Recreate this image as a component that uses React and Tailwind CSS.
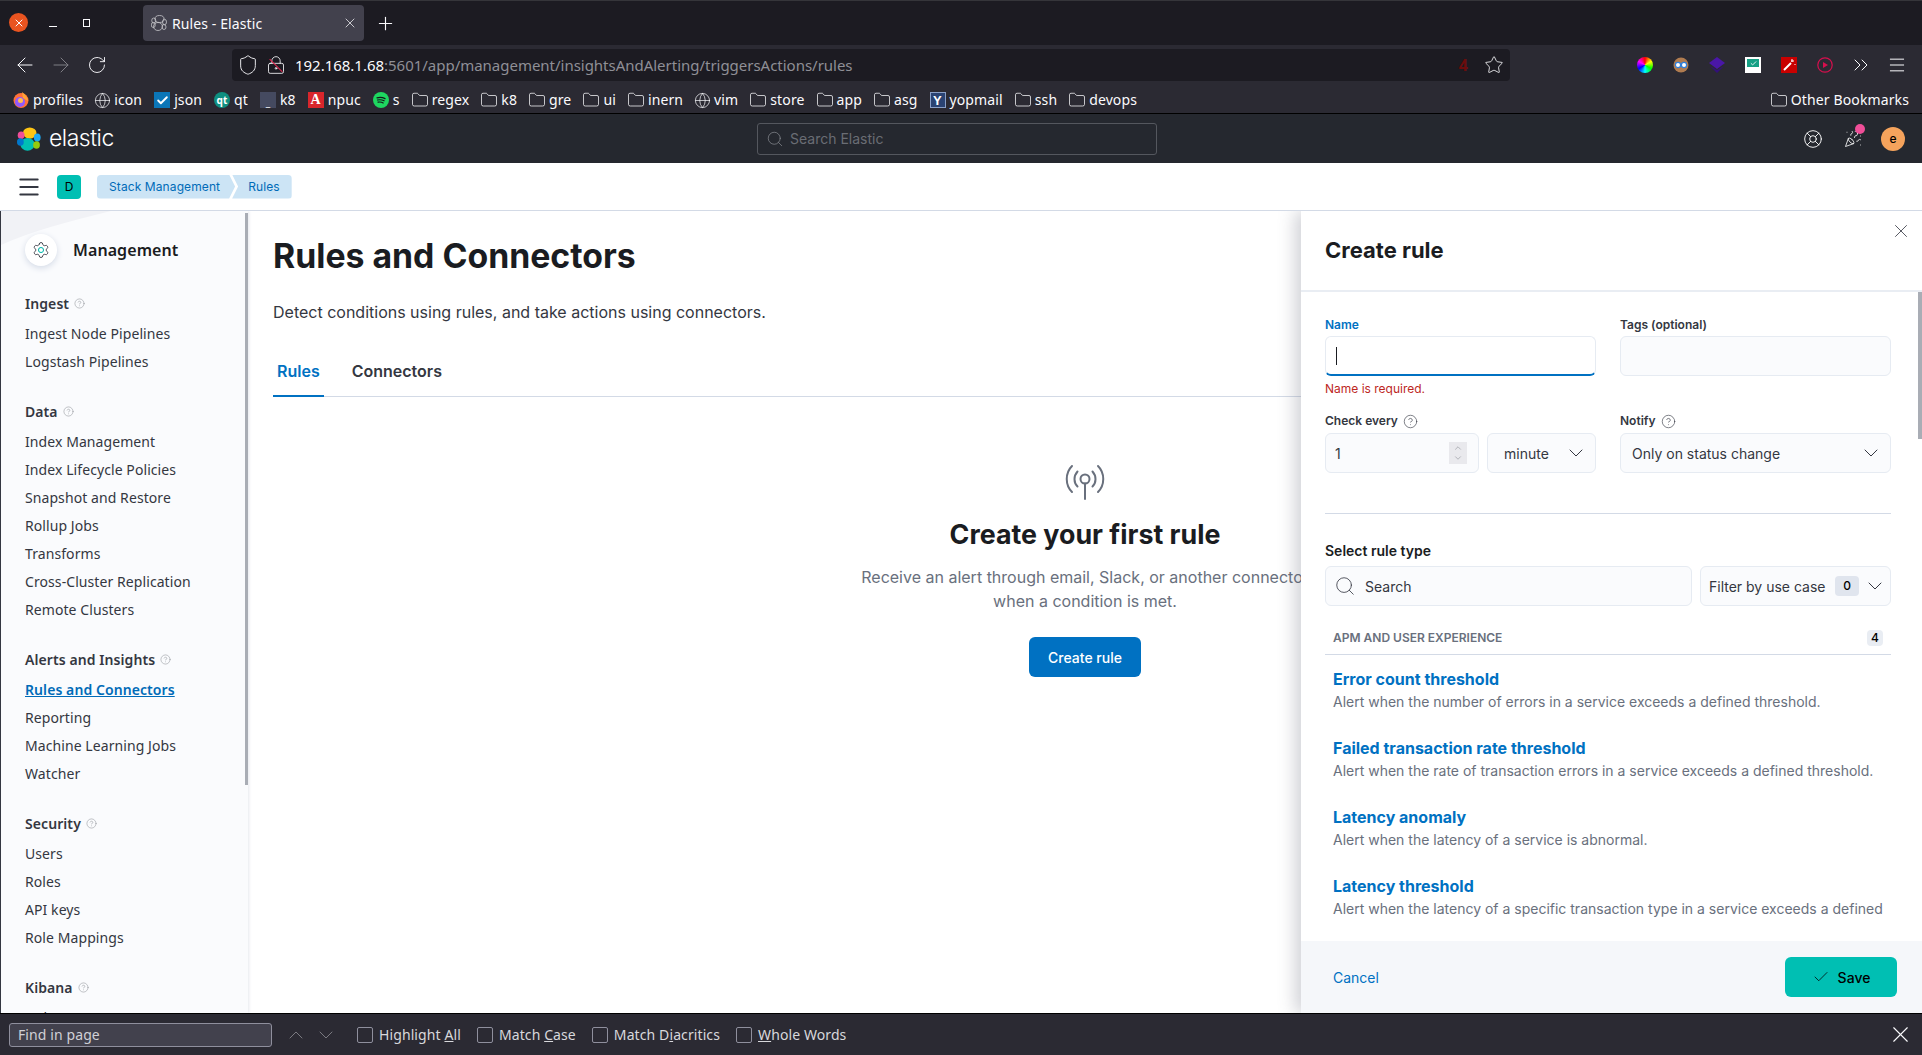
import React from "react";
import {
  ArrowLeft,
  ArrowRight,
  Check,
  ChevronDown,
  ChevronUp,
  ChevronsRight,
  CircleHelp,
  Folder,
  Globe,
  LifeBuoy,
  LockKeyhole,
  Menu,
  PartyPopper,
  Plus,
  RotateCw,
  Search,
  Settings,
  Shield,
  Star,
  X,
} from "lucide-react";

const ElasticLogo = ({ size = 24 }) => (
  <svg width={size} height={size} viewBox="0 0 32 32">
    <ellipse cx="17" cy="8" rx="9" ry="7.5" fill="#fec514" />
    <ellipse cx="5.5" cy="11" rx="4.5" ry="5" fill="#f04e98" />
    <ellipse cx="27" cy="14" rx="4.5" ry="5.5" fill="#1ba9f5" />
    <ellipse cx="14" cy="23" rx="9.5" ry="8.5" fill="#00bfb3" />
    <ellipse cx="4.5" cy="20" rx="4.5" ry="5" fill="#0077cc" />
    <ellipse cx="26" cy="24" rx="4.5" ry="5" fill="#93c90e" />
  </svg>
);

const TabFavicon = () => (
  <svg width="16" height="16" viewBox="0 0 32 32" fill="none" stroke="#c8c8cc" strokeWidth="1.6">
    <ellipse cx="17" cy="8" rx="9" ry="7" />
    <ellipse cx="5.5" cy="11" rx="4" ry="5" />
    <ellipse cx="27" cy="14" rx="4" ry="5.5" />
    <ellipse cx="14" cy="23" rx="9" ry="8" />
    <ellipse cx="4.5" cy="20" rx="4" ry="5" />
    <ellipse cx="26" cy="24" rx="4" ry="5" />
  </svg>
);

const Firefox = () => (
  <svg width="16" height="16" viewBox="0 0 16 16">
    <circle cx="8" cy="8.5" r="7.5" fill="#ff7139" />
    <circle cx="7" cy="10" r="5" fill="#9059ff" />
    <circle cx="7.5" cy="8.5" r="2.5" fill="#ffbd4f" />
    <path d="M9 0 C13 3 15 6 15 9 L10 6Z" fill="#ffa436" />
  </svg>
);

const JsonIcon = () => (
  <span className="flex h-4 w-4 items-center justify-center bg-[#0b76b8]">
    <Check size={13} strokeWidth={3.5} className="text-white" />
  </span>
);
const QtIcon = () => (
  <span className="flex h-4 w-4 items-center justify-center rounded-full bg-[#0f8f80] text-[10px] font-bold leading-none text-white">
    qt
  </span>
);
const TermIcon = () => (
  <span className="flex h-4 w-4 items-end justify-center bg-[#454a60] pb-0.5 text-[10px] leading-[8px] text-white">
    _
  </span>
);
const NpucIcon = () => (
  <span className="flex h-4 w-4 items-center justify-center bg-[#d8262c] font-['Liberation_Serif',serif] text-[14px] font-bold leading-none text-white">
    A
  </span>
);
const SpotifyIcon = () => (
  <svg width="16" height="16" viewBox="0 0 16 16" fill="none" stroke="#14171a" strokeWidth="1.2" strokeLinecap="round">
    <circle cx="8" cy="8" r="8" fill="#1ed760" stroke="none" />
    <path d="M4 5.8c2.8-.7 5.6-.5 8 .8M4.5 8c2.3-.5 4.6-.3 6.6.8M5 10.2c1.8-.4 3.6-.2 5.2.7" />
  </svg>
);
const YopIcon = () => (
  <span className="flex h-4 w-4 items-center justify-center border border-[#8aa0c8] bg-[#2a4373] font-['Liberation_Sans',sans-serif] text-[13px] font-bold leading-none text-white">
    Y
  </span>
);
const GlobeIcon = () => <Globe size={17} strokeWidth={1} className="-mx-px text-[#fbfbfe]" />;
const FolderIcon = () => <Folder size={18} strokeWidth={1} className="-mx-px text-[#fbfbfe]" />;

const BOOKMARKS = [
  { label: "profiles", icon: <Firefox /> },
  { label: "icon", icon: <GlobeIcon /> },
  { label: "json", icon: <JsonIcon /> },
  { label: "qt", icon: <QtIcon /> },
  { label: "k8", icon: <TermIcon /> },
  { label: "npuc", icon: <NpucIcon /> },
  { label: "s", icon: <SpotifyIcon /> },
  { label: "regex", icon: <FolderIcon /> },
  { label: "k8", icon: <FolderIcon /> },
  { label: "gre", icon: <FolderIcon /> },
  { label: "ui", icon: <FolderIcon /> },
  { label: "inern", icon: <FolderIcon /> },
  { label: "vim", icon: <GlobeIcon /> },
  { label: "store", icon: <FolderIcon /> },
  { label: "app", icon: <FolderIcon /> },
  { label: "asg", icon: <FolderIcon /> },
  { label: "yopmail", icon: <YopIcon /> },
  { label: "ssh", icon: <FolderIcon /> },
  { label: "devops", icon: <FolderIcon /> },
];

const NAV = [
  { title: "Ingest", items: ["Ingest Node Pipelines", "Logstash Pipelines"] },
  {
    title: "Data",
    items: [
      "Index Management",
      "Index Lifecycle Policies",
      "Snapshot and Restore",
      "Rollup Jobs",
      "Transforms",
      "Cross-Cluster Replication",
      "Remote Clusters",
    ],
  },
  {
    title: "Alerts and Insights",
    items: ["Rules and Connectors", "Reporting", "Machine Learning Jobs", "Watcher"],
  },
  { title: "Security", items: ["Users", "Roles", "API keys", "Role Mappings"] },
  { title: "Kibana", items: ["Index Patterns"] },
];

const RULE_TYPES = [
  {
    title: "Error count threshold",
    text: "Alert when the number of errors in a service exceeds a defined threshold.",
  },
  {
    title: "Failed transaction rate threshold",
    text: "Alert when the rate of transaction errors in a service exceeds a defined threshold.",
  },
  { title: "Latency anomaly", text: "Alert when the latency of a service is abnormal." },
  {
    title: "Latency threshold",
    text: "Alert when the latency of a specific transaction type in a service exceeds a defined",
  },
];

const FIND_OPTIONS = [
  { before: "Highlight ", key: "A", after: "ll" },
  { before: "Match ", key: "C", after: "ase" },
  { before: "Match D", key: "i", after: "acritics" },
  { before: "", key: "W", after: "hole Words" },
];

const BrowserChrome = () => (
  <div className="shrink-0 font-['Noto_Sans',sans-serif] text-[#fbfbfe]">
    {/* tabs */}
    <div className="flex h-[45px] items-start border-t border-t-[#35353a] bg-[#1c1b22] pt-1">
      <span className="ml-[9px] mt-[8px] flex h-[19px] w-[19px] items-center justify-center rounded-full bg-[#e95420]">
        <X size={12} strokeWidth={2} />
      </span>
      <span className="ml-[21px] mt-[21px] h-px w-2 bg-[#fbfbfe]" />
      <span className="ml-[26px] mt-[14px] h-[8px] w-[7px] border border-[#fbfbfe]" />
      <div className="ml-[53px] flex h-9 w-[221px] items-center rounded bg-[#42414d] pl-2 pr-[6px]">
        <TabFavicon />
        <span className="ml-[5px] flex-1 text-[14px] tracking-[0.1px]">Rules - Elastic</span>
        <X size={16} strokeWidth={1.1} />
      </div>
      <Plus size={21} strokeWidth={1.3} className="ml-[11px] mt-[8px]" />
    </div>
    {/* nav bar */}
    <div className="flex h-10 items-center bg-[#2b2a33]">
      <ArrowLeft size={24} strokeWidth={1} className="ml-[13px]" />
      <ArrowRight size={24} strokeWidth={1} className="ml-[12px] text-[#7f7e85]" />
      <RotateCw size={20} strokeWidth={1.1} className="ml-[14px]" />
      <div className="ml-[125px] flex h-8 w-[1278px] items-center rounded bg-[#1c1b22] pl-[5px] pr-[6px]">
        <Shield size={22} strokeWidth={1} />
        <span className="relative ml-[7px] flex">
          <LockKeyhole size={20} strokeWidth={1} />
          <span className="absolute left-[1px] top-[10px] h-px w-[18px] rotate-45 bg-[#e22850]" />
        </span>
        <span className="ml-[9px] flex-1 whitespace-nowrap text-[15px] tracking-[-0.02px]">
          192.168.1.68<span className="text-[#8f8f96]">:5601/app/management/insightsAndAlerting/triggersActions/rules</span>
        </span>
        <span className="mr-[16px] text-[16px] font-bold text-[#6b0d0d]">4</span>
        <Star size={20} strokeWidth={1} />
      </div>
      <div className="ml-[127px] flex items-center">
        <span className="h-4 w-4 rounded-full bg-[conic-gradient(#ff0000,#ffff00,#00ff00,#00ffff,#0000ff,#ff00ff,#ff0000)]" />
        <svg width="16" height="16" viewBox="0 0 16 16" fill="none" className="ml-[20px]">
          <circle cx="8" cy="8" r="7.5" fill="#b07c50" />
          <circle cx="5" cy="8" r="2.6" fill="#ffffff" stroke="#2f7fdc" strokeWidth="1.2" />
          <circle cx="11" cy="8" r="2.6" fill="#ffffff" stroke="#2f7fdc" strokeWidth="1.2" />
        </svg>
        <svg width="16" height="16" viewBox="0 0 16 16" className="ml-[20px]">
          <path d="M8 0l8 6-8 6-8-6z" fill="#4a17a8" />
          <path d="M1 9l7 7 7-7-7 4z" fill="#33107a" />
        </svg>
        <span className="ml-[20px] flex h-4 w-4 items-start justify-center bg-white pt-[2px]">
          <span className="flex h-[8px] w-[12px] items-center justify-center bg-[#17a085]">
            <Check size={7} strokeWidth={3} />
          </span>
        </span>
        <svg width="16" height="16" viewBox="0 0 16 16" fill="none" className="ml-[20px]">
          <rect width="16" height="16" fill="#c90000" />
          <path d="M3 13l7-7" stroke="#ffffff" strokeWidth="2" />
          <path d="M11 2v3M13 4h-3M14 7v1" stroke="#ffffff" strokeWidth="1" />
        </svg>
        <svg width="16" height="16" viewBox="0 0 16 16" className="ml-[20px]" fill="none">
          <circle cx="8" cy="8" r="7.2" stroke="#d70f4e" strokeWidth="1.2" />
          <path d="M6 5l5 3-5 3z" fill="#d70f4e" />
        </svg>
        <ChevronsRight size={24} strokeWidth={1} className="ml-[16px]" />
        <Menu size={20} strokeWidth={1.2} className="ml-[14px]" />
      </div>
    </div>
    {/* bookmarks */}
    <div className="flex h-[29px] items-center justify-between border-b border-b-black bg-[#2b2a33] pl-[13px] pr-[13px] pt-[2px] text-[14px] leading-none tracking-[0.12px]">
      <div className="flex items-center gap-[12px]">
        {BOOKMARKS.map((b, i) => (
          <span key={i} className="flex items-center gap-[4px]">
            {b.icon}
            {b.label}
          </span>
        ))}
      </div>
      <span className="flex items-center gap-[4px]">
        <FolderIcon />
        Other Bookmarks
      </span>
    </div>
  </div>
);

const KibanaHeader = () => (
  <header className="relative flex h-[49px] shrink-0 items-center justify-between bg-[#25282f] pl-[17px] pr-[17px] font-['Inter',sans-serif]">
    <div className="flex items-center gap-2">
      <ElasticLogo />
      <span className="text-[23px] font-light leading-none tracking-[-0.5px] text-white">elastic</span>
    </div>
    <div className="absolute left-[757px] flex h-8 w-[400px] items-center rounded-[3px] border border-[#54575e] pl-2 text-[14px] text-[#6a6d74]">
      <Search size={18} strokeWidth={0.9} className="text-[#8e9097]" />
      <span className="ml-[6px]">Search Elastic</span>
    </div>
    <div className="flex items-center text-white">
      <LifeBuoy size={20} strokeWidth={1.1} />
      <span className="relative ml-[21px] flex">
        <PartyPopper size={18} strokeWidth={1.1} />
        <span className="absolute -top-[6px] left-[11px] h-[10px] w-[10px] rounded-full bg-[#f04e98]" />
      </span>
      <span className="ml-[19px] flex h-6 w-6 items-center justify-center rounded-full bg-[#f5a35c] text-[12px] font-medium text-black">e</span>
    </div>
  </header>
);

const Breadcrumbs = () => (
  <div className="flex h-[48px] shrink-0 items-center border-b border-b-[#d3dae6] bg-white font-['Inter',sans-serif]">
    <Menu size={26} strokeWidth={1.9} className="ml-[16px] text-[#343741]" />
    <span className="ml-[15px] flex h-6 w-6 items-center justify-center rounded bg-[#00bfb3] text-[12px] text-black">D</span>
    <div className="ml-4 flex h-6 text-[12px] tracking-[0.1px] text-[#006bb8]">
      <span className="flex items-center rounded-l bg-[#cce4f5] pl-3 pr-[15px] [clip-path:polygon(0_0,calc(100%-6px)_0,100%_50%,calc(100%-6px)_100%,0_100%)]">
        Stack Management
      </span>
      <span className="-ml-[3px] flex items-center rounded-r bg-[#cce4f5] pl-4 pr-3 [clip-path:polygon(0_0,100%_0,100%_100%,0_100%,6px_50%)]">Rules</span>
    </div>
  </div>
);

const Sidebar = () => (
  <aside className="relative flex h-full w-[248px] shrink-0 flex-col overflow-hidden border-l border-l-[#343741] bg-[#fafbfd] pl-[24px] text-[14px] tracking-[0.08px] shadow-[1px_0_3px_#e6e8ee]">
    <svg className="absolute left-0 top-0" width="110" height="36" viewBox="0 0 110 36">
      <path d="M0 0H110C70 10 30 20 0 34Z" fill="#f1f2f6" />
    </svg>
    <div className="relative mb-[27px] mt-[23px] flex h-8 items-center gap-[16px]">
      <span className="relative flex h-8 w-8 items-center justify-center rounded-full bg-white shadow-[0_2px_6px_#d3dae6]">
        <Settings size={18} strokeWidth={1.2} className="text-[#343741]" />
        <span className="absolute left-[13px] top-[13px] h-[6px] w-[6px] rounded-full border border-[#00bfb3] bg-white" />
      </span>
      <span className="text-[16px] font-semibold text-[#1a1c21]">Management</span>
    </div>
    {NAV.map((section) => (
      <div key={section.title} className="relative mb-[26px]">
        <div className="mb-[6px] flex h-5 items-center gap-[5px] font-semibold text-[#343741]">
          {section.title}
          <CircleHelp size={11} strokeWidth={1.1} className="text-[#8a8d94]" />
        </div>
        {section.items.map((item) => (
          <div
            key={item}
            className={
              item === "Rules and Connectors"
                ? "flex h-7 items-center font-semibold text-[#006bb8] underline"
                : "flex h-7 items-center text-[#343741]"
            }
          >
            {item}
          </div>
        ))}
      </div>
    ))}
    <div className="absolute left-[244px] top-[2px] h-[572px] w-[3px] bg-[#a9adb5]" />
  </aside>
);

const RuleIcon = () => (
  <svg width="42" height="38" viewBox="0 0 42 38" fill="none" stroke="#69707d" strokeWidth="2" strokeLinecap="round">
    <circle cx="21" cy="16" r="4.500" />
    <path d="M21 20.500V36" />
    <path d="M13.500 8.500c-4 4.500-4 11 0 15M28.500 8.500c4 4.500 4 11 0 15" />
    <path d="M8 3c-7 7-7 19 0 26M34 3c7 7 7 19 0 26" />
  </svg>
);

const MainContent = () => (
  <main className="flex min-w-0 flex-1 flex-col bg-white pl-[25px] pr-0 pt-[24px] font-['Inter',sans-serif]">
    <h1 className="text-[33.8px] font-bold leading-[42px] text-[#1a1c21]">Rules and Connectors</h1>
    <p className="mt-[23px] text-[16px] leading-6 text-[#343741]">
      Detect conditions using rules, and take actions using connectors.
    </p>
    <div className="mt-[24px] flex h-[49px] gap-[24px] border-b border-b-[#d3dae6] text-[16px] font-semibold">
      <span className="flex h-[49px] items-center border-b-2 border-b-[#0071c2] px-1 pb-[2px] text-[#0071c2]">Rules</span>
      <span className="flex h-[49px] items-center px-1 pb-[4px] text-[#343741]">Connectors</span>
    </div>
    <div className="-ml-[25px] flex flex-col items-center pt-[66px]">
      <RuleIcon />
      <h2 className="mt-[15px] text-[26.8px] font-bold leading-9 text-[#1a1c21]">Create your first rule</h2>
      <p className="mt-[13px] text-center text-[16px] leading-6 text-[#69707d]">
        Receive an alert through email, Slack, or another connector
        <br />
        when a condition is met.
      </p>
      <button className="mt-[24px] h-10 w-[112px] rounded-md bg-[#0071c2] text-[14px] font-medium text-white">Create rule</button>
    </div>
  </main>
);

const FieldLabel = ({ children, className = "text-[#343741]" }) => (
  <div className={`flex h-[14px] items-center gap-[5px] text-[12px] font-semibold ${className}`}>{children}</div>
);

const Help = () => <CircleHelp size={15} strokeWidth={1} className="text-[#343741]" />;

const inputBox = "flex h-10 items-center rounded-md border border-[#e6ebf2] bg-[#fafbfd] text-[14px] text-[#343741]";

const Flyout = () => (
  <section className="absolute bottom-0 right-0 top-0 flex w-[621px] flex-col bg-white font-['Inter',sans-serif] shadow-[-6px_0_16px_rgba(90,95,110,0.28)]">
    <div className="relative flex h-[81px] shrink-0 items-center border-b-2 border-b-[#e9edf3] pl-6">
      <h2 className="text-[22px] font-bold text-[#1a1c21]">Create rule</h2>
      <X size={22} strokeWidth={0.9} className="absolute right-[10px] top-[9px] text-[#343741]" />
    </div>
    <div className="relative flex-1 overflow-hidden pl-6 pr-[31px] pt-[26px]">
      <div className="absolute right-0 top-0 h-[147px] w-[4px] bg-[#a9adb5]" />
      <div className="grid grid-cols-2 gap-x-[24px]">
        <div>
          <FieldLabel className="text-[#0071c2]">Name</FieldLabel>
          <div className="mt-1 flex h-10 items-center overflow-hidden rounded-md border border-[#e6ebf2] border-b-2 border-b-[#0071c2] bg-white pl-[10px]">
            <span className="h-[18px] w-px bg-[#1a1c21]" />
          </div>
          <div className="mt-[6px] h-[14px] text-[12px] leading-[14px] text-[#bd271e]">Name is required.</div>
        </div>
        <div>
          <FieldLabel>Tags (optional)</FieldLabel>
          <div className={`mt-1 ${inputBox}`} />
        </div>
      </div>
      <div className="mt-[18px] grid grid-cols-2 gap-x-[24px]">
        <div>
          <FieldLabel>
            Check every <Help />
          </FieldLabel>
          <div className="mt-[5px] flex gap-2">
            <div className={`${inputBox} flex-1 justify-between pl-[9px] pr-[11px]`}>
              1
              <span className="flex h-[22px] w-[18px] flex-col items-center justify-center bg-[#e9e9ed] text-[#8a8d94]">
                <ChevronUp size={10} strokeWidth={1.4} />
                <ChevronDown size={10} strokeWidth={1.4} />
              </span>
            </div>
            <div className={`${inputBox} w-[109px] justify-between pl-4 pr-[7px]`}>
              minute
              <ChevronDown size={24} strokeWidth={1} />
            </div>
          </div>
        </div>
        <div>
          <FieldLabel>
            Notify <Help />
          </FieldLabel>
          <div className={`mt-[5px] ${inputBox} justify-between pl-[11px] pr-[7px]`}>
            Only on status change
            <ChevronDown size={24} strokeWidth={1} />
          </div>
        </div>
      </div>
      <div className="mt-[40px] h-px bg-[#d3dae6]" />
      <h3 className="mt-[27px] h-5 text-[14px] font-semibold leading-5 text-[#1a1c21]">Select rule type</h3>
      <div className="mt-[5px] flex gap-2">
        <div className={`${inputBox} flex-1 pl-2 text-[#69707d]`}>
          <Search size={22} strokeWidth={0.9} className="text-[#343741]" />
          <span className="ml-[9px]">Search</span>
        </div>
        <div className={`${inputBox} w-[191px] justify-between pl-2 pr-[3px]`}>
          Filter by use case
          <span className="flex items-center gap-[4px]">
            <span className="flex h-5 w-6 items-center justify-center rounded bg-[#e0e5ee] text-[12px] font-medium text-black">0</span>
            <ChevronDown size={24} strokeWidth={1} />
          </span>
        </div>
      </div>
      <div className="mt-4 flex h-[33px] items-center justify-between border-b border-b-[#d3dae6] pl-2 pr-2 text-[12px] font-semibold text-[#69707d]">
        APM AND USER EXPERIENCE
        <span className="flex h-4 w-4 items-center justify-center rounded bg-[#e9edf3] font-medium text-black">4</span>
      </div>
      <div className="pl-2 pt-3">
        {RULE_TYPES.map((rule) => (
          <div key={rule.title} className="mb-6">
            <div className="mb-px h-6 text-[16px] font-bold leading-6 text-[#0071c2]">{rule.title}</div>
            <div className="h-5 whitespace-nowrap text-[14px] leading-5 text-[#69707d]">{rule.text}</div>
          </div>
        ))}
      </div>
    </div>
    <div className="flex h-[72px] shrink-0 items-center justify-between bg-[#f5f7fa] pl-8 pr-[25px] text-[14px]">
      <span className="text-[#0071c2]">Cancel</span>
      <button className="flex h-10 w-[112px] items-center justify-center gap-[8px] rounded-md bg-[#00bfb3] font-medium text-black">
        <Check size={18} strokeWidth={1} />
        Save
      </button>
    </div>
  </section>
);

const FindBar = () => (
  <div className="flex h-[42px] shrink-0 items-center border-t border-t-black bg-[#2b2a33] pl-[9px] pr-[8px] font-['Noto_Sans',sans-serif] text-[14px] tracking-[0.1px] text-[#fbfbfe]">
    <div className="flex h-6 w-[263px] items-center rounded-[3px] border border-[#8f8f9d] bg-[#42414d] pl-2 text-[#d0d0d6]">
      Find in page
    </div>
    <ChevronUp size={24} strokeWidth={0.8} className="ml-[12px] text-[#8f8f96]" />
    <ChevronDown size={24} strokeWidth={0.8} className="ml-[6px] text-[#8f8f96]" />
    <div className="ml-[19px] flex flex-1 items-center gap-[16px]">
      {FIND_OPTIONS.map((o) => (
        <span key={o.before + o.key} className="flex items-center gap-[6px] text-[#d8d8dc]">
          <span className="h-4 w-4 rounded-[2px] border border-[#8f8f9d]" />
          <span>
            {o.before}
            <u>{o.key}</u>
            {o.after}
          </span>
        </span>
      ))}
    </div>
    <X size={27} strokeWidth={1} />
  </div>
);

const App = () => (
  <div className="flex h-[1055px] w-full flex-col overflow-hidden bg-white">
    <BrowserChrome />
    <KibanaHeader />
    <Breadcrumbs />
    <div className="relative flex min-h-0 flex-1 overflow-hidden">
      <Sidebar />
      <MainContent />
      <Flyout />
    </div>
    <FindBar />
  </div>
);

export default App;
